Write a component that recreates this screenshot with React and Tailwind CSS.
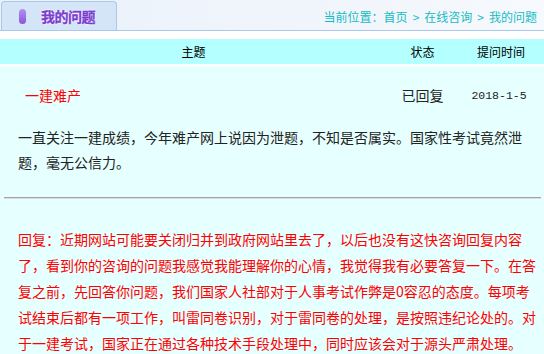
import React from "react";

const cjk = { fontFamily: '"Noto Sans CJK SC", "Noto Sans", sans-serif' };
const PUNCT = "，。：；";

function Line({ text }) {
  return (
    <span className="block whitespace-nowrap">
      {Array.from(text).map((ch, i) =>
        PUNCT.includes(ch) ? (
          <span key={i} className="inline-block w-[14px]">{ch}</span>
        ) : (
          <React.Fragment key={i}>{ch}</React.Fragment>
        )
      )}
    </span>
  );
}

const question = [
  "一直关注一建成绩，今年难产网上说因为泄题，不知是否属实。国家性考试竟然泄",
  "题，毫无公信力。",
];

const reply = [
  "回复：近期网站可能要关闭归并到政府网站里去了，以后也没有这快咨询回复内容",
  "了，看到你的咨询的问题我感觉我能理解你的心情，我觉得我有必要答复一下。在答",
  "复之前，先回答你问题，我们国家人社部对于人事考试作弊是0容忍的态度。每项考",
  "试结束后都有一项工作，叫雷同卷识别，对于雷同卷的处理，是按照违纪论处的。对",
  "于一建考试，国家正在通过各种技术手段处理中，同时应该会对于源头严肃处理。",
];

export default function App() {
  return (
    <div className="w-[544px] h-[354px] overflow-hidden bg-white" style={cjk}>
      {/* Header */}
      <div className="h-[31px] flex items-end justify-between border-b border-[#a9c9ea] bg-gradient-to-r from-[#eaf1fa] to-[#f6f9fd]">
        <div className="ml-[1px] w-[116px] h-[29px] rounded-t-[4px] border border-b-0 border-[#a9c9ea] bg-[#d5e5f8] flex items-center">
          <div className="ml-[17px] w-[7px] h-[15px] rounded-full bg-gradient-to-b from-[#b590ee] to-[#8a55d8]" />
          <span
            className="ml-[15px] text-[14px] font-bold leading-none text-[#7a3fd0] tracking-[-0.5px]"
            style={{ textShadow: "0 0 2px #fff, 0 0 2px #fff, 0 0 1px #fff", WebkitTextStroke: "0.3px #7a3fd0" }}
          >
            我的问题
          </span>
        </div>
        <div className="self-stretch flex items-center pr-[7px] pt-[4px] text-[12px] text-[#14bcc4] leading-none">
          当前位置：首页<span className="mx-[5px]">&gt;</span>在线咨询<span className="mx-[5px]">&gt;</span>我的问题
        </div>
      </div>

      {/* Table header */}
      <div className="mt-[8px] h-[25px] bg-[#b4ffff] grid grid-cols-[387px_71px_86px] items-center text-[12px] text-black leading-none">
        <div className="text-center">主题</div>
        <div className="text-center">状态</div>
        <div className="text-center">提问时间</div>
      </div>

      {/* Body */}
      <div className="mt-[2px] bg-[#e6ffff] h-[300px]">
        <div className="pt-[17px] grid grid-cols-[387px_71px_86px] items-center h-[42px] text-[14px] leading-[25px]">
          <div className="pl-[25px] text-[#ff0000]">一建难产</div>
          <div className="text-center text-[#222]">已回复</div>
          <div className="text-center text-[#222] pr-[4px]" style={{ fontFamily: '"Liberation Mono", monospace', fontSize: "11.5px" }}>
            2018-1-5
          </div>
        </div>

        <div className="mt-[17px] pl-[18px] text-[14px] leading-[25px] text-[#222]">
          {question.map((l, i) => (
            <Line key={i} text={l} />
          ))}
        </div>

        <div className="mt-[22px] ml-[4px] mr-[3px] h-[2px] border-t border-[#a3a3a3] bg-[#dcdcdc]" />

        <div className="mt-[27px] pl-[18px] text-[14px] leading-[26px] text-[#ff0000]">
          {reply.map((l, i) => (
            <Line key={i} text={l} />
          ))}
        </div>
      </div>
    </div>
  );
}
